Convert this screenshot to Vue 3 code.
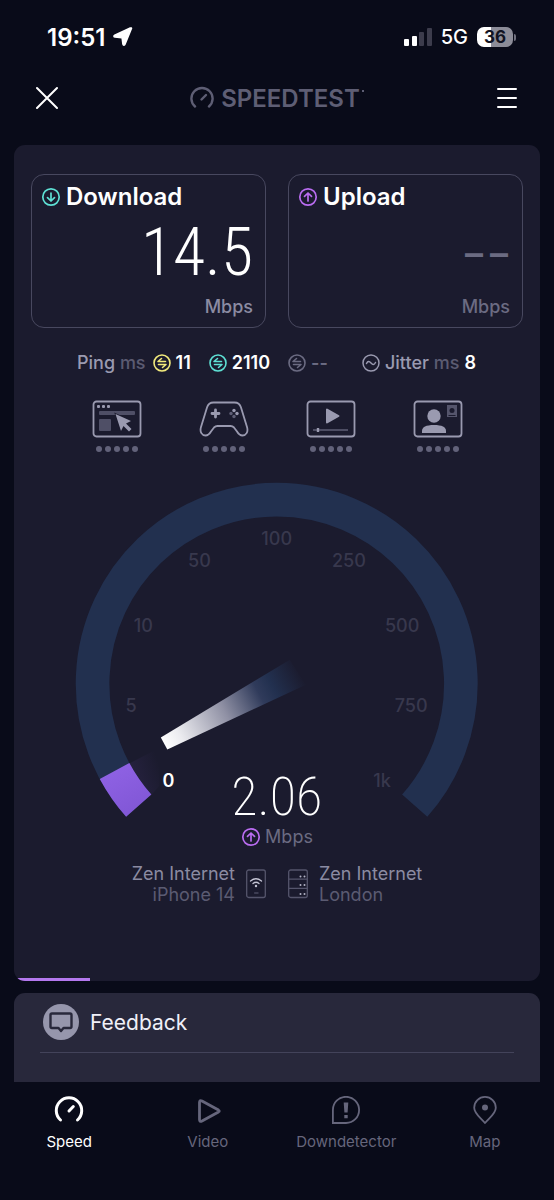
<script setup>
const dots = [3, 12, 21, 30, 39]

const scale = [
  { label: '5', x: 132, y: 712 },
  { label: '10', x: 144, y: 632 },
  { label: '50', x: 200, y: 568 },
  { label: '100', x: 277, y: 546 },
  { label: '250', x: 349, y: 568 },
  { label: '500', x: 402, y: 632 },
  { label: '750', x: 411, y: 712 },
  { label: '1k', x: 382, y: 787 },
]

const pings = [
  { tone: 'idle', value: '11' },
  { tone: 'down', value: '2110' },
  { tone: 'none', value: '--' },
]

const progress = 14.5
</script>

<template>
  <div class="page">
    <div class="status">
      <div class="clock">
        <span>19:51</span>
        <svg width="20" height="20" viewBox="0 0 20 20" aria-hidden="true">
          <path d="M18.300 1.800 12 17.300C11.500 18.500 10 18.300 9.900 17L9.200 11.200Q9.100 10.700 8.600 10.700L2 10C.8 9.900.6 8.800 1.700 8.300L17.300 1.100C18.200.8 18.700 1 18.300 1.800z" fill="#fff" stroke="#fff" stroke-width="1.600" stroke-linejoin="round" />
        </svg>
      </div>
      <div class="radio">
        <svg width="28" height="20" viewBox="0 0 28 20" aria-hidden="true">
          <rect x="0" y="12" width="5" height="7" rx="1" fill="#fff" />
          <rect x="8" y="9" width="5" height="10" rx="1" fill="#fff" />
          <rect x="15" y="5" width="5" height="14" rx="1" fill="#3c3c4c" />
          <rect x="23" y="1" width="5" height="18" rx="1" fill="#3c3c4c" />
        </svg>
        <span class="network">5G</span>
        <span class="battery">36</span>
      </div>
    </div>

    <header class="header">
      <button class="icon-button" type="button" aria-label="Close">
        <svg width="22" height="24" viewBox="0 0 22 24"><path d="M1 2 21 22M21 2 1 22" stroke="#fff" stroke-width="2" stroke-linecap="round" /></svg>
      </button>
      <div class="brand">
        <svg width="24" height="24" viewBox="0 0 24 24" fill="none" stroke="currentColor" stroke-width="2.400" stroke-linecap="round" aria-hidden="true">
          <path d="M5 20.500A10.600 10.600 0 1 1 19 20.500" />
          <path d="M11.500 13.500 16 9" />
        </svg>
        <span>SPEEDTEST</span><i></i>
      </div>
      <button class="icon-button" type="button" aria-label="Menu">
        <svg width="22" height="22" viewBox="0 0 22 22"><path d="M2 2H20M2 11H20M2 20H20" stroke="#fff" stroke-width="2" stroke-linecap="round" /></svg>
      </button>
    </header>

    <main class="panel">
      <div class="cards">
        <section class="card">
          <h2 class="card-title">
            <svg class="down" width="20" height="20" viewBox="0 0 20 20" fill="none" stroke="currentColor" stroke-width="1.700" stroke-linecap="round" stroke-linejoin="round" aria-hidden="true">
              <circle cx="10" cy="10" r="8.200" /><path d="M10 6V14M6.500 10.700 10 14 13.500 10.700" />
            </svg>
            Download
          </h2>
          <p class="card-value">14.5</p>
          <p class="card-unit">Mbps</p>
        </section>
        <section class="card pending">
          <h2 class="card-title">
            <svg class="up" width="20" height="20" viewBox="0 0 20 20" fill="none" stroke="currentColor" stroke-width="1.700" stroke-linecap="round" stroke-linejoin="round" aria-hidden="true">
              <circle cx="10" cy="10" r="8.200" /><path d="M10 14V6M6.500 9.300 10 6 13.500 9.300" />
            </svg>
            Upload
          </h2>
          <p class="card-value"><span>–</span><span>–</span></p>
          <p class="card-unit">Mbps</p>
        </section>
      </div>

      <div class="latency">
        <div class="pings">
          <span class="name">Ping <small>ms</small></span>
          <span v-for="p in pings" :key="p.tone" class="metric" :class="p.tone">
            <svg width="18" height="18" viewBox="0 0 18 18" fill="none" stroke="currentColor" stroke-width="1.600" stroke-linecap="round" stroke-linejoin="round" aria-hidden="true">
              <circle cx="9" cy="9" r="8" /><path d="M8.500 4.500 5 7.500H12.500M5.500 10.500H13L9.500 13.500" />
            </svg>
            <b>{{ p.value }}</b>
          </span>
        </div>
        <div class="jitter">
          <svg width="18" height="18" viewBox="0 0 18 18" fill="none" stroke="currentColor" stroke-width="1.500" stroke-linecap="round" aria-hidden="true">
            <circle cx="9" cy="9" r="8" /><path d="M4.500 9.500C6 6.500 7.500 7.500 9 9S12 11.500 13.500 8.500" />
          </svg>
          <span class="name">Jitter <small>ms</small></span>
          <b>8</b>
        </div>
      </div>

      <div class="uses">
        <div class="use">
          <svg width="50" height="38" viewBox="0 0 50 38" aria-hidden="true">
            <rect x="1.500" y="1.500" width="47" height="35" rx="3" fill="none" stroke="#9a9ab0" stroke-width="1.800" />
            <g fill="#9a9ab0"><rect x="5" y="5" width="3" height="3" rx="1" /><rect x="10" y="5" width="3" height="3" rx="1" /><rect x="15" y="5" width="3" height="3" rx="1" /></g>
            <rect x="7" y="11" width="36" height="4" rx="1" fill="#4f4f66" />
            <rect x="7" y="19" width="12" height="12" rx="1" fill="#4f4f66" />
            <path d="M23.500 14 39 21 34 23.500 39.500 29 37 31.500 31.500 26 29 31z" fill="#9a9ab0" stroke="#1b1b2e" stroke-width="1.500" paint-order="stroke" />
          </svg>
          <svg class="dots" width="42" height="6" viewBox="0 0 42 6"><circle v-for="d in dots" :key="d" :cx="d" cy="3" r="3" /></svg>
        </div>
        <div class="use">
          <svg width="50" height="38" viewBox="0 0 50 38" aria-hidden="true">
            <path d="M14.500 2.500H35.500C39 2.500 41 4 42 7.500L48 27C49.500 32 47 35.500 43.500 35.500 41 35.500 39.500 34 38 31.500L35 27.500C34 26.500 33 26 31.500 26H18.500C17 26 16 26.500 15 27.500L12 31.500C10.500 34 9 35.500 6.500 35.500 3 35.500.5 32 2 27L8 7.500C9 4 11 2.500 14.500 2.500Z" fill="none" stroke="#9a9ab0" stroke-width="1.800" />
            <path d="M16.500 10V17M13 13.500H20" stroke="#9a9ab0" stroke-width="2.800" stroke-linecap="round" />
            <g fill="#9a9ab0"><circle cx="35" cy="10.500" r="1.700" /><circle cx="38" cy="13.500" r="1.700" /></g>
            <g fill="#5f5f76"><circle cx="32" cy="13.500" r="1.700" /><circle cx="35" cy="16.500" r="1.700" /></g>
          </svg>
          <svg class="dots" width="42" height="6" viewBox="0 0 42 6"><circle v-for="d in dots" :key="d" :cx="d" cy="3" r="3" /></svg>
        </div>
        <div class="use">
          <svg width="50" height="38" viewBox="0 0 50 38" aria-hidden="true">
            <rect x="1.500" y="1.500" width="47" height="35" rx="3" fill="none" stroke="#9a9ab0" stroke-width="1.800" />
            <path d="M21 9.500V22.500L32.500 16z" fill="#9a9ab0" stroke="#9a9ab0" stroke-width="2" stroke-linejoin="round" />
            <path d="M7 30H42" stroke="#5f5f76" stroke-width="1.600" /><path d="M12 28V32" stroke="#9a9ab0" stroke-width="2.400" />
          </svg>
          <svg class="dots" width="42" height="6" viewBox="0 0 42 6"><circle v-for="d in dots" :key="d" :cx="d" cy="3" r="3" /></svg>
        </div>
        <div class="use">
          <svg width="50" height="38" viewBox="0 0 50 38" aria-hidden="true">
            <rect x="1.500" y="1.500" width="47" height="35" rx="3" fill="none" stroke="#9a9ab0" stroke-width="1.800" />
            <circle cx="21" cy="16" r="6.700" fill="#9a9ab0" />
            <path d="M9 33V31C9 27 13 25 21 25S33 27 33 31V33z" fill="#9a9ab0" />
            <rect x="34" y="5" width="10" height="12" fill="#55556c" /><circle cx="39" cy="10.500" r="2.500" fill="#1b1b2e" /><path d="M35.500 15.500H42.500" stroke="#1b1b2e" />
          </svg>
          <svg class="dots" width="42" height="6" viewBox="0 0 42 6"><circle v-for="d in dots" :key="d" :cx="d" cy="3" r="3" /></svg>
        </div>
      </div>

      <svg class="gauge" viewBox="76 483 402 335" role="img" aria-label="Upload speed 2.06 Mbps">
        <defs>
          <linearGradient id="needle" gradientUnits="userSpaceOnUse" x1="164" y1="744" x2="300" y2="672">
            <stop offset="0" stop-color="#fff" />
            <stop offset=".12" stop-color="#ececf0" />
            <stop offset=".45" stop-color="#8f90a4" />
            <stop offset=".7" stop-color="#303b5b" />
            <stop offset=".8" stop-color="#22304f" />
            <stop offset="1" stop-color="#22304f" stop-opacity="0" />
          </linearGradient>
          <linearGradient id="arc" gradientUnits="userSpaceOnUse" x1="115" y1="765" x2="140" y2="810">
            <stop offset="0" stop-color="#8f62e4" />
            <stop offset="1" stop-color="#8157d6" />
          </linearGradient>
          <linearGradient id="glow" gradientUnits="userSpaceOnUse" x1="130" y1="775" x2="160" y2="765">
            <stop offset="0" stop-color="#8f62e4" stop-opacity=".1" />
            <stop offset="1" stop-color="#8f62e4" stop-opacity="0" />
          </linearGradient>
        </defs>
        <path d="M139.500 805.600A183.500 183.500 0 1 1 414.500 805.600" fill="none" stroke="#22304f" stroke-width="33.500" />
        <path d="M139.500 805.600A183.500 183.500 0 0 1 115.400 771" fill="none" stroke="url(#arc)" stroke-width="33.500" />
        <path d="M130 763.500 160 748V786L152 795A167 167 0 0 1 130 763.500Z" fill="url(#glow)" />
        <path d="M161.500 737.500 290 660 306 685 168 749.500Z" fill="url(#needle)" />
        <g class="scale">
          <text v-for="s in scale" :key="s.label" :x="s.x" :y="s.y">{{ s.label }}</text>
          <text class="reached" x="169" y="787">0</text>
        </g>
        <text class="reading" x="277" y="815">2.06</text>
      </svg>

      <p class="gauge-unit">
        <svg class="up" width="20" height="20" viewBox="0 0 20 20" fill="none" stroke="currentColor" stroke-width="1.700" stroke-linecap="round" stroke-linejoin="round" aria-hidden="true">
          <circle cx="10" cy="10" r="8.200" /><path d="M10 14V6M6.500 9.300 10 6 13.500 9.300" />
        </svg>
        Mbps
      </p>

      <div class="ends">
        <div class="end client">
          <p>Zen Internet<br /><span>iPhone 14</span></p>
          <svg width="20" height="30" viewBox="0 0 20 30" fill="none" aria-hidden="true">
            <rect x=".7" y="1" width="18.600" height="27.500" rx="2" stroke="#55556c" stroke-width="1.300" />
            <path d="M4.500 12Q10 7.500 15.500 12M7 14.500Q10 12 13 14.500" stroke="#c4c4d4" stroke-width="1.300" stroke-linecap="round" /><circle cx="10" cy="17" r="1.200" fill="#c4c4d4" />
            <path d="M8 24H12.500" stroke="#55556c" stroke-width="1.200" />
          </svg>
        </div>
        <div class="end server">
          <svg width="20" height="30" viewBox="0 0 20 30" fill="none" aria-hidden="true">
            <rect x=".7" y="1" width="18.600" height="27.500" rx="2" stroke="#55556c" stroke-width="1.300" />
            <path d="M1 10.200H19M1 19.300H19" stroke="#55556c" stroke-width="1.300" />
            <g fill="#b4b4c6"><circle cx="12.500" cy="7.500" r="1" /><circle cx="16.500" cy="7.500" r="1" /><circle cx="12.500" cy="16" r="1" /><circle cx="16.500" cy="16" r="1" /><circle cx="12.500" cy="25" r="1" /><circle cx="16.500" cy="25" r="1" /></g>
          </svg>
          <p>Zen Internet<br /><span>London</span></p>
        </div>
      </div>
      <div class="progress" :style="{ width: progress + '%' }"></div>
    </main>

    <section class="more">
      <button class="feedback" type="button">
        <svg width="36" height="36" viewBox="0 0 36 36" aria-hidden="true">
          <circle cx="18" cy="18" r="18" fill="#9696ac" />
          <path d="M9 9.500H27Q28.500 9.500 28.500 11V22.500Q28.500 24 27 24H20.500L18 27 15.500 24H9Q7.500 24 7.500 22.500V11Q7.500 9.500 9 9.500Z" fill="none" stroke="#28283b" stroke-width="2.400" stroke-linejoin="round" />
        </svg>
        Feedback
      </button>
    </section>

    <nav class="tabs">
      <a class="tab active" href="#speed" aria-current="page">
        <svg width="30" height="28" viewBox="0 0 30 28" fill="none" stroke="currentColor" stroke-width="3" stroke-linecap="round" aria-hidden="true">
          <path d="M6.500 24A12.700 12.700 0 1 1 23.500 24" /><path d="M15 15 19.300 10.500" />
        </svg>
        Speed
      </a>
      <a class="tab" href="#video">
        <svg width="30" height="28" viewBox="0 0 30 28" fill="none" stroke="currentColor" stroke-width="2.800" stroke-linejoin="round" aria-hidden="true">
          <path d="M6.500 6.500Q6.500 3.600 9 5L25.500 14.100Q27 15 25.500 15.900L9 25Q6.500 26.300 6.500 23.500Z" />
        </svg>
        Video
      </a>
      <a class="tab" href="#downdetector">
        <svg width="30" height="28" viewBox="0 0 30 28" fill="none" stroke="currentColor" stroke-width="1.800" aria-hidden="true">
          <path d="M1.900 27V14A13.100 13.100 0 1 1 15 27Z" />
          <path d="M12.700 6.500H17.300L16.600 16.500H13.400ZM13.300 19H16.700V22.300H13.300Z" fill="currentColor" stroke="none" />
        </svg>
        Downdetector
      </a>
      <a class="tab" href="#map">
        <svg width="30" height="28" viewBox="0 0 30 28" fill="none" stroke="currentColor" stroke-width="1.800" stroke-linejoin="round" aria-hidden="true">
          <path d="M15 27C10 21 4.200 17.500 4.200 11.700A10.800 10.800 0 0 1 25.800 11.700C25.800 17.500 20 21 15 27Z" /><circle cx="15" cy="11.500" r="3" fill="currentColor" stroke="none" />
        </svg>
        Map
      </a>
    </nav>
  </div>
</template>

<style>
body {
  background: #090b19;
}
</style>

<style scoped>
.page {
  display: flex;
  flex-direction: column;
  min-height: 100vh;
  background: #090b19;
  color: #fff;
  font-family: Inter, "Liberation Sans", sans-serif;
}
h2,
p {
  margin: 0;
}
svg {
  display: block;
  flex: none;
}
button {
  padding: 0;
  border: 0;
  background: none;
  color: inherit;
  font: inherit;
}

.status {
  display: flex;
  align-items: center;
  justify-content: space-between;
  height: 74px;
  padding: 0 38px 0 47px;
}
.clock,
.radio {
  display: flex;
  align-items: center;
}
.clock {
  gap: 8px;
  font-size: 24px;
  font-weight: 600;
}
.radio {
  gap: 9px;
}
.network {
  font-size: 20px;
  font-weight: 500;
}
.battery {
  position: relative;
  width: 36px;
  margin-right: 3px;
  border-radius: 7px;
  background: linear-gradient(90deg, #fff 38%, #8c8c98 38%);
  color: #111322;
  font-size: 17px;
  font-weight: 700;
  line-height: 20px;
  text-align: center;
}
.battery::after {
  content: "";
  position: absolute;
  top: 7px;
  right: -3px;
  width: 2px;
  height: 7px;
  border-radius: 0 2px 2px 0;
  background: #70707e;
}

.header {
  display: flex;
  align-items: center;
  justify-content: space-between;
  height: 48px;
  padding: 0 36px;
}
.icon-button {
  display: grid;
  place-items: center;
}
.brand {
  display: flex;
  align-items: center;
  gap: 7px;
  color: #5e5e74;
  font-size: 24px;
  font-weight: 600;
}
.brand i {
  align-self: flex-start;
  width: 2px;
  height: 2px;
  margin: 6px 0 0 -5px;
  background: currentColor;
}

.panel {
  position: relative;
  margin: 23px 14px 0;
  padding: 29px 17px 76px;
  overflow: hidden;
  border-radius: 11px;
  background: #1b1b2e;
}
.cards {
  display: grid;
  grid-template-columns: 1fr 1fr;
  gap: 22px;
}
.card {
  display: flex;
  flex-direction: column;
  padding: 9px 12px 10px 9px;
  border: 1px solid #48485f;
  border-radius: 13px;
}
.card-title {
  display: flex;
  align-items: center;
  gap: 5px;
  font-size: 24px;
  font-weight: 600;
  line-height: 26px;
}
.card-value {
  margin-top: 13px;
  font-family: "Liberation Sans Narrow", "Roboto Condensed", Roboto, sans-serif;
  font-size: 66px;
  font-weight: 300;
  line-height: 60px;
  text-align: right;
}
.card-unit {
  margin-top: 14px;
  color: #8b8ba2;
  font-size: 18px;
  font-weight: 500;
  line-height: 20px;
  text-align: right;
}
.pending .card-value,
.pending .card-unit {
  color: #6b6b82;
}
.pending .card-value {
  display: flex;
  justify-content: flex-end;
  gap: 7px;
  padding-right: 2px;
  font-family: Inter, sans-serif;
  font-size: 36px;
  font-weight: 600;
}
.down {
  color: #5ee0d4;
}
.up {
  color: #b96cf0;
}

.latency {
  display: flex;
  justify-content: space-between;
  height: 24px;
  margin-top: 23px;
  padding: 0 47px 0 46px;
  font-size: 18px;
  line-height: 24px;
}
.pings {
  display: flex;
  gap: 18px;
}
.name {
  color: #9a9ab0;
  font-weight: 500;
}
.pings .name {
  margin-right: -11px;
}
.name small {
  color: #5b5b72;
  font-size: inherit;
}
.metric,
.jitter {
  display: flex;
  align-items: center;
  gap: 5px;
}
.metric b,
.jitter b {
  color: #fff;
  font-weight: 600;
}
.jitter {
  color: #9a9ab0;
}
.idle {
  color: #f2ea7c;
}
.metric.none,
.metric.none b {
  color: #6b6b82;
}

.uses {
  display: grid;
  grid-template-columns: repeat(4, 1fr);
  margin-top: 25px;
  padding: 0 32px;
}
.use {
  display: flex;
  flex-direction: column;
  align-items: center;
  gap: 8px;
}
.dots {
  fill: #62627a;
}

.gauge {
  width: 82%;
  margin: 30px auto 0;
  overflow: visible;
}
.scale {
  fill: #38384d;
  font-size: 18px;
  font-weight: 500;
  text-anchor: middle;
}
.scale .reached {
  fill: #fff;
  font-weight: 600;
}
.reading {
  fill: #fff;
  font-family: "Liberation Sans Narrow", "Roboto Condensed", Roboto, sans-serif;
  font-size: 54px;
  font-weight: 200;
  text-anchor: middle;
}
.gauge-unit {
  display: flex;
  align-items: center;
  justify-content: center;
  gap: 4px;
  margin-top: 7px;
  color: #6b6b82;
  font-size: 18px;
  line-height: 24px;
}

.ends {
  display: grid;
  grid-template-columns: 1fr 1fr;
  gap: 22px;
  margin-top: 14px;
  color: #8b8ba2;
  font-size: 18px;
  line-height: 21px;
}
.ends span {
  color: #5b5b72;
}
.end {
  display: flex;
  align-items: center;
  gap: 11px;
}
.client {
  justify-content: flex-end;
  text-align: right;
}
.progress {
  position: absolute;
  bottom: 0;
  left: 0;
  height: 3px;
  background: #b478ee;
}

.more {
  flex: 1;
  margin: 12px 14px 0;
  padding: 11px 26px 29px;
  border-radius: 11px 11px 0 0;
  background: #28283b;
}
.feedback {
  display: flex;
  align-items: center;
  gap: 11px;
  width: 100%;
  padding: 0 3px 12px;
  border-bottom: 1px solid #43435a;
  color: #f0f0f8;
  font-size: 21px;
}

.tabs {
  display: grid;
  grid-template-columns: repeat(4, 1fr);
  padding: 14px 0 48px;
}
.tab {
  display: flex;
  flex-direction: column;
  align-items: center;
  gap: 8px;
  color: #66667c;
  font-size: 15px;
  line-height: 20px;
  text-decoration: none;
}
.tab.active {
  color: #fff;
}
</style>
